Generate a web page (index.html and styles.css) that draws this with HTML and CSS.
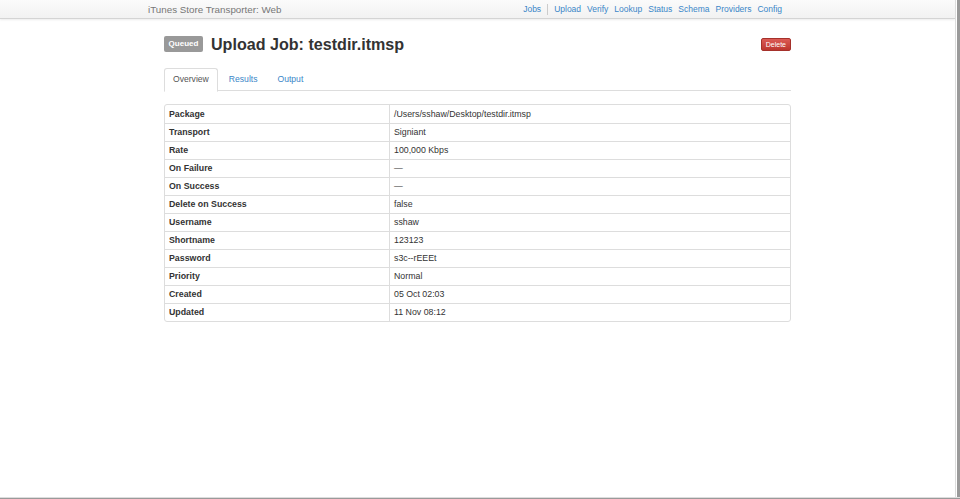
FILE: index.html
```html
<!DOCTYPE html>
<html>
<head>
<meta charset="utf-8">
<link rel="stylesheet" href="styles.css">
</head>
<body>
<div class="navbar">
  <div class="container nav-inner">
    <span class="brand">iTunes Store Transporter: Web</span>
    <ul class="nav">
      <li><a>Jobs</a></li>
      <li class="divider"></li>
      <li><a>Upload</a></li>
      <li><a>Verify</a></li>
      <li><a>Lookup</a></li>
      <li><a>Status</a></li>
      <li><a>Schema</a></li>
      <li><a>Providers</a></li>
      <li><a>Config</a></li>
    </ul>
  </div>
</div>
<div class="container main">
  <div class="page-header">
    <span class="badge">Queued</span>
    <h1>Upload Job: testdir.itmsp</h1>
    <span class="btn-delete">Delete</span>
  </div>
  <ul class="tabs">
    <li class="active"><a>Overview</a></li>
    <li><a>Results</a></li>
    <li><a>Output</a></li>
  </ul>
  <table class="details">
    <tr><th>Package</th><td>/Users/sshaw/Desktop/testdir.itmsp</td></tr>
    <tr><th>Transport</th><td>Signiant</td></tr>
    <tr><th>Rate</th><td>100,000 Kbps</td></tr>
    <tr><th>On Failure</th><td>—</td></tr>
    <tr><th>On Success</th><td>—</td></tr>
    <tr><th>Delete on Success</th><td>false</td></tr>
    <tr><th>Username</th><td>sshaw</td></tr>
    <tr><th>Shortname</th><td>123123</td></tr>
    <tr><th>Password</th><td>s3c--rEEEt</td></tr>
    <tr><th>Priority</th><td>Normal</td></tr>
    <tr><th>Created</th><td>05 Oct 02:03</td></tr>
    <tr><th>Updated</th><td>11 Nov 08:12</td></tr>
  </table>
</div>
<div class="edge-right"></div>
<div class="edge-bottom"></div>
</body>
</html>
```
FILE: styles.css
```css
* { box-sizing: border-box; }
html, body { margin: 0; padding: 0; background: #fff; }
body {
  font-family: "Liberation Sans", Arial, sans-serif;
  color: #333;
  padding-right: 5px;
  height: 499px;
  overflow: hidden;
}
.container { width: 627px; margin: 0 auto; }
.navbar {
  height: 19px;
  background: linear-gradient(#fbfbfb, #f2f2f2);
  border-bottom: 1px solid #d4d4d4;
  box-shadow: 0 1px 2px rgba(0,0,0,0.08);
}
.nav-inner {
  display: flex;
  align-items: center;
  justify-content: space-between;
  height: 18px;
}
.brand {
  margin-left: -16px;
  font-size: 9.8px;
  color: #777;
}
.nav {
  display: flex;
  align-items: center;
  list-style: none;
  margin: 0;
  padding: 0 9px 0 0;
  font-size: 8.5px;
}
.nav li a { color: #3a86c8; margin-left: 6px; }
.nav li:first-child a { margin-left: 0; }
.nav li.divider {
  width: 1px;
  height: 11px;
  background: #ccc;
  margin: 0 0 0 6px;
}
.main { padding-top: 16px; }
.page-header {
  display: flex;
  align-items: center;
  height: 17px;
}
.badge {
  display: inline-block;
  background: #999;
  color: #fff;
  font-size: 8px;
  font-weight: bold;
  height: 16px;
  line-height: 16px;
  padding: 0;
  width: 39px;
  text-align: center;
  border-radius: 2px;
}
h1 {
  margin: 1px 0 0 8px;
  font-size: 16.1px;
  font-weight: bold;
  color: #333;
  line-height: 17px;
  flex: 1;
}
.btn-delete {
  background: linear-gradient(#dc5b55, #bd362f);
  color: #fff;
  font-size: 7px;
  height: 13px;
  line-height: 11px;
  padding: 0 4px;
  border-radius: 2px;
  border: 1px solid #a5312b;
  margin-top: 1px;
}
.tabs {
  display: flex;
  list-style: none;
  margin: 16px 0 0 0;
  padding: 0;
  border-bottom: 1px solid #ddd;
  height: 23px;
  font-size: 8.6px;
}
.tabs li { margin-right: 2px; }
.tabs li a {
  display: block;
  height: 23px;
  line-height: 21px;
  padding: 0 8px;
  color: #3a86c8;
  border: 1px solid transparent;
  border-radius: 3px 3px 0 0;
}
.tabs li.active a {
  color: #555;
  background: #fff;
  border-color: #ddd #ddd transparent;
  height: 24px;
}
.details {
  margin-top: 13px;
  width: 627px;
  border: 1px solid #ddd;
  border-radius: 3px;
  border-collapse: separate;
  border-spacing: 0;
  font-size: 8.8px;
}
.details th, .details td {
  text-align: left;
  padding: 4px 4px;
  line-height: 9px;
  height: 18px;
  border-top: 1px solid #ddd;
  color: #333;
}
.details tr:first-child th, .details tr:first-child td { border-top: 0; height: 18px; padding-top: 5px; }
.details th { width: 224px; font-weight: bold; }
.details td { border-left: 1px solid #ddd; }
.edge-right {
  position: fixed;
  top: 0; right: 0;
  width: 5px; height: 499px;
  border-left: 1px solid #ddd;
  background: linear-gradient(90deg, #fff 0 1px, #9a9a9a 1px);
}
.edge-bottom {
  position: fixed;
  left: 0; bottom: 0;
  width: 960px; height: 2px;
  background: #9a9a9a;
  border-top: 1px solid #ddd;
}
```
